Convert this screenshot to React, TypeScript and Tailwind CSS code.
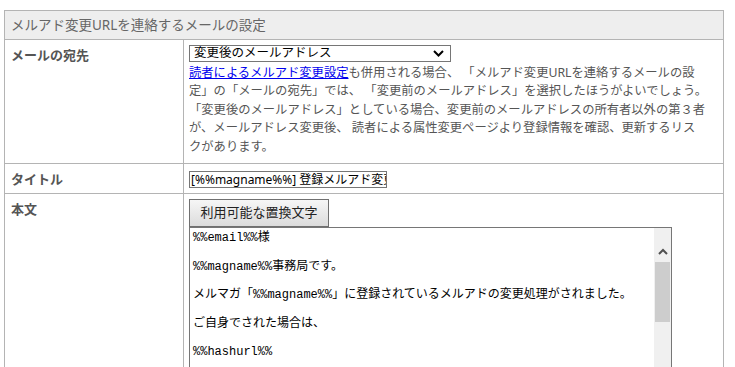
import React from "react";

const FONT = { fontFamily: '"Noto Sans", "Noto Sans CJK JP", sans-serif' };
const MONO = { fontFamily: '"Liberation Mono", "Noto Sans CJK JP", monospace' };

function Label({ children }: { children: React.ReactNode }) {
  return (
    <div className="border-r border-[#b4b4b4] px-[6px] pt-[6px] text-[13px] font-bold leading-[18px] text-[#555555]">
      {children}
    </div>
  );
}

export default function App() {
  return (
    <div className="bg-white w-[735px] h-[367px] overflow-hidden pt-[10px] pl-[4px]" style={FONT}>
      <div className="w-[720px] border border-[#b4b4b4]">
        <div className="h-[29px] bg-[#eeeeee] px-[6px] flex items-center text-[13.5px] text-[#666666] border-b border-[#b4b4b4]">
          メルアド変更URLを連絡するメールの設定
        </div>

        <div className="grid grid-cols-[179px_1fr] border-b border-[#b4b4b4]">
          <Label>メールの宛先</Label>
          <div className="pl-[5px] pt-[5px] pb-[7px]">
            <div className="w-[262px] h-[17px] border border-[#767676] flex items-center justify-between pl-[4px] pr-[6px] text-[12.5px] text-black leading-none">
              <span>変更後のメールアドレス</span>
              <svg width="11" height="7" viewBox="0 0 11 7">
                <path d="M1 1 L5.5 5.5 L10 1" fill="none" stroke="#000" strokeWidth="2" />
              </svg>
            </div>
            <div className="text-[12.3px] leading-[18.4px] text-[#555555] whitespace-nowrap mt-[2px]">
              <a className="text-[#0000ee] underline">読者によるメルアド変更設定</a>も併用される場合、 「メルアド変更URLを連絡するメールの設
              <br />
              定」の「メールの宛先」では、 「変更前のメールアドレス」を選択したほうがよいでしょう。
              <br />
              「変更後のメールアドレス」としている場合、変更前のメールアドレスの所有者以外の第３者
              <br />
              が、メールアドレス変更後、 読者による属性変更ページより登録情報を確認、更新するリス
              <br />
              クがあります。
            </div>
          </div>
        </div>

        <div className="grid grid-cols-[179px_1fr] border-b border-[#b4b4b4]">
          <Label>タイトル</Label>
          <div className="pl-[5px] pt-[7px] pb-[5px]">
            <div className="w-[198px] h-[17px] border border-[#767676] overflow-hidden whitespace-nowrap pl-[1px] text-[12px] leading-[15px] text-black">
              [%%magname%%] 登録メルアド変更通知
            </div>
          </div>
        </div>

        <div className="grid grid-cols-[179px_1fr] h-[200px]">
          <Label>本文</Label>
          <div className="pl-[5px] pt-[5px]">
            <div className="w-[140px] h-[28px] border border-[#707070] bg-gradient-to-b from-[#f6f6f6] to-[#dcdcdc] flex items-center justify-center text-[13px] text-[#222222]">
              利用可能な置換文字
            </div>
            <div className="w-[483px] h-[160px] border border-[#767676] flex">
              <div className="flex-1 pl-[3px] pt-[3px] text-[12px] leading-[14.25px] text-black whitespace-pre" style={MONO}>
                <div>%%email%%様</div>
                <div>&nbsp;</div>
                <div>%%magname%%事務局です。</div>
                <div>&nbsp;</div>
                <div>メルマガ「%%magname%%」に登録されているメルアドの変更処理がされました。</div>
                <div>&nbsp;</div>
                <div>ご自身でされた場合は、</div>
                <div>&nbsp;</div>
                <div>%%hashurl%%</div>
              </div>
              <div className="w-[17px] bg-[#f0f0f0] flex flex-col items-center">
                <div className="h-[34px] flex items-center justify-center pt-[12px]">
                  <svg width="10" height="7" viewBox="0 0 10 7">
                    <path d="M1 6 L5 2 L9 6" fill="none" stroke="#505050" strokeWidth="2" />
                  </svg>
                </div>
                <div className="w-[15px] h-[60px] bg-[#cdcdcd]" />
              </div>
            </div>
          </div>
        </div>
      </div>
    </div>
  );
}
